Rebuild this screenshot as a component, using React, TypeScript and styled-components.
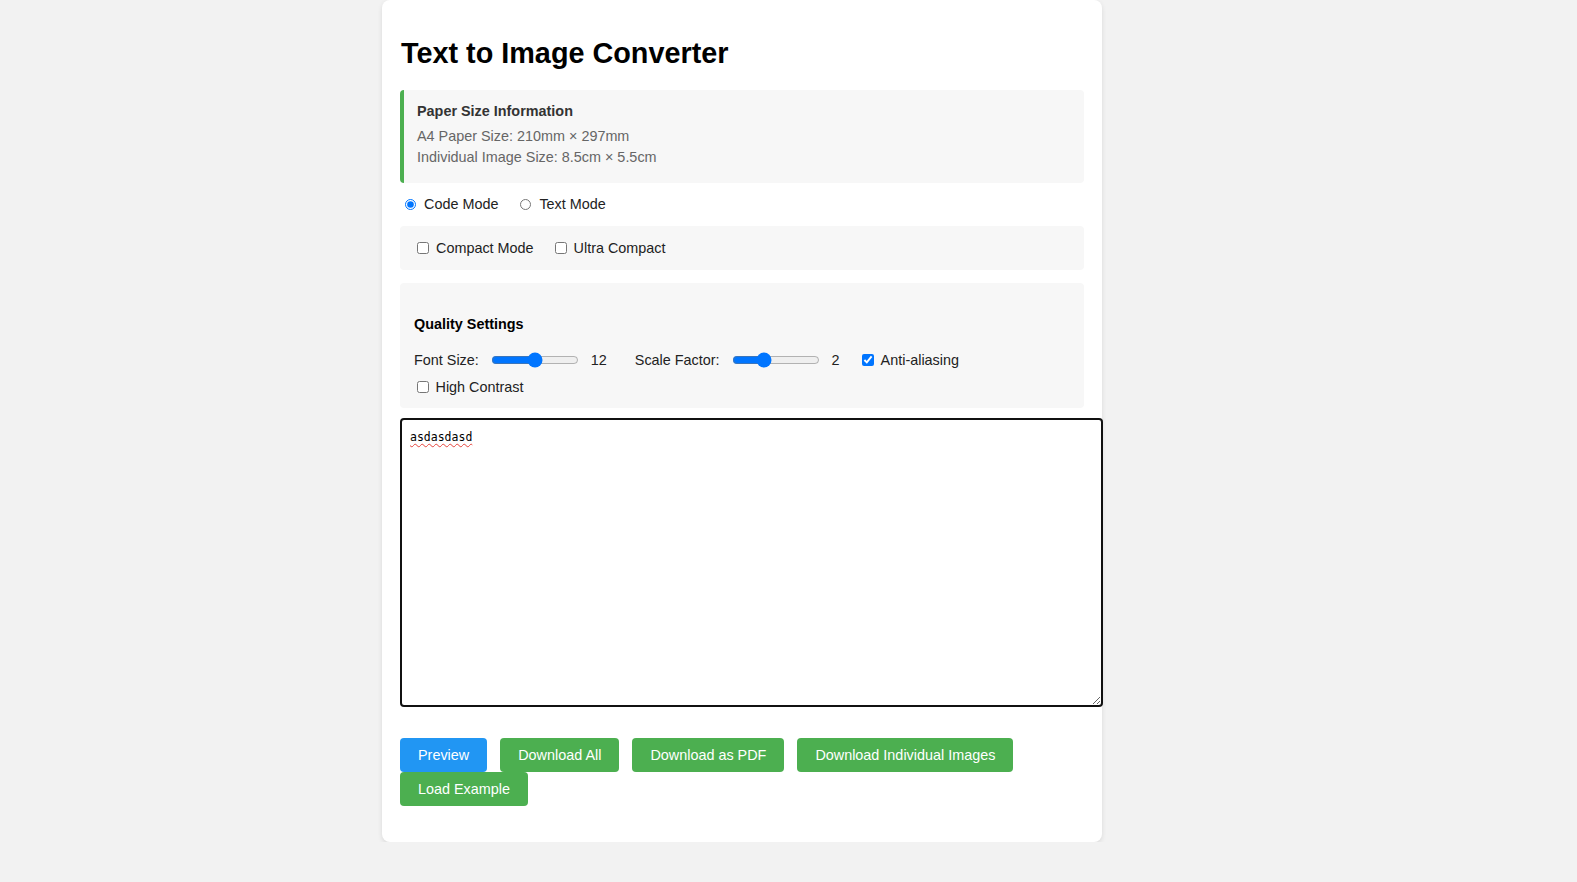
import React, { useState } from "react";
import styled, { createGlobalStyle } from "styled-components";

const GlobalStyle = createGlobalStyle`
  html, body { margin: 0; padding: 0; }
  body {
    background: #f2f2f2;
    font-family: "Liberation Sans", Arial, sans-serif;
    color: #222;
  }
`;

const Layout = styled.div`
  width: 813px;
  margin: 0 auto;
`;

const Card = styled.main`
  width: 720px;
  box-sizing: border-box;
  background: #fff;
  border-radius: 8px;
  box-shadow: 0 2px 5px rgba(0, 0, 0, 0.1);
  padding: 18px 18px 36px;
`;

const Title = styled.h1`
  margin: 18px 0 20px 1px;
  font-size: 28.8px;
  line-height: 34px;
  font-weight: 700;
  color: #000;
`;

const InfoBox = styled.section`
  background: #f7f7f7;
  border-left: 4px solid #4caf50;
  border-radius: 4px;
  padding: 11px 15px 15px 13px;
  height: 93px;
  box-sizing: border-box;
`;

const InfoTitle = styled.div`
  font-size: 14.4px;
  line-height: 21px;
  font-weight: 700;
  color: #333;
  margin-bottom: 4px;
`;

const InfoLine = styled.div`
  font-size: 14.4px;
  line-height: 21px;
  color: #666;
`;

const ModeRow = styled.div`
  display: flex;
  align-items: center;
  gap: 22px;
  height: 20px;
  margin: 11px 0 12px;
  padding-left: 5px;
`;

const OptionLabel = styled.label<{ $gap?: number }>`
  display: inline-flex;
  align-items: center;
  gap: ${(p) => p.$gap ?? 7}px;
  font-size: 14.4px;
  line-height: 20px;
  color: #222;
  white-space: nowrap;
`;

const Radio = styled.input.attrs({ type: "radio" })`
  width: 11px;
  height: 11px;
  margin: 0;
`;

const Check = styled.input.attrs({ type: "checkbox" })<{ $inset?: number }>`
  width: 12px;
  height: 12px;
  margin: 0 0 0 ${(p) => p.$inset ?? 0}px;
`;

const Panel = styled.section<{ $pad: string; $top?: number }>`
  background: #f7f7f7;
  border-radius: 4px;
  padding: ${(p) => p.$pad};
  margin-top: ${(p) => p.$top ?? 0}px;
`;

const PanelRow = styled.div<{ $gap: number }>`
  display: flex;
  align-items: center;
  gap: ${(p) => p.$gap}px;
  height: 20px;
`;

const PanelTitle = styled.div`
  font-size: 14.4px;
  line-height: 20px;
  font-weight: 700;
  color: #000;
  margin-bottom: 16px;
`;

const SliderGroup = styled.div<{ $trail: number }>`
  display: flex;
  align-items: center;
  gap: 12px;
  margin-right: ${(p) => p.$trail}px;
  font-size: 14.4px;
  color: #222;
`;

const Slider = styled.input.attrs({ type: "range" })`
  width: 88px;
  margin: 0;
`;

const QualityRows = styled.div`
  display: flex;
  flex-direction: column;
  gap: 7px;
`;

const Editor = styled.textarea`
  display: block;
  width: 703px;
  height: 289px;
  box-sizing: border-box;
  margin: 10px 0 31px;
  padding: 10px 8px 8px;
  border: 2px solid #111;
  border-radius: 4px;
  font-family: "DejaVu Sans Mono", monospace;
  font-size: 11.5px;
  line-height: 14px;
  color: #000;
  outline: none;
  text-decoration: underline wavy #e5443c;
  text-decoration-thickness: 1px;
  text-underline-offset: 2px;
`;

const ButtonBar = styled.div`
  display: flex;
  flex-wrap: wrap;
  column-gap: 13px;
  row-gap: 0;
`;

const ActionButton = styled.button<{ $primary?: boolean }>`
  height: 34px;
  padding: 0 18px;
  border: none;
  border-radius: 4px;
  background: ${(p) => (p.$primary ? "#2196f3" : "#4caf50")};
  color: #fff;
  font-family: "Liberation Sans", Arial, sans-serif;
  font-size: 14.4px;
  cursor: pointer;
  white-space: nowrap;
`;

export default function App() {
  const [mode, setMode] = useState<"code" | "text">("code");
  const [compact, setCompact] = useState(false);
  const [ultra, setUltra] = useState(false);
  const [fontSize, setFontSize] = useState(12);
  const [scale, setScale] = useState(2);
  const [aa, setAa] = useState(true);
  const [contrast, setContrast] = useState(false);
  const [text, setText] = useState("asdasdasd");

  return (
    <>
      <GlobalStyle />
      <Layout>
        <Card>
          <Title>Text to Image Converter</Title>
          <InfoBox>
            <InfoTitle>Paper Size Information</InfoTitle>
            <InfoLine>A4 Paper Size: 210mm × 297mm</InfoLine>
            <InfoLine>Individual Image Size: 8.5cm × 5.5cm</InfoLine>
          </InfoBox>

          <ModeRow>
            <OptionLabel $gap={8}>
              <Radio name="mode" checked={mode === "code"} onChange={() => setMode("code")} />
              Code Mode
            </OptionLabel>
            <OptionLabel $gap={8}>
              <Radio name="mode" checked={mode === "text"} onChange={() => setMode("text")} />
              Text Mode
            </OptionLabel>
          </ModeRow>

          <Panel $pad="12px 14px">
            <PanelRow $gap={21}>
              <OptionLabel $gap={7}>
                <Check $inset={3} checked={compact} onChange={(e) => setCompact(e.target.checked)} />
                Compact Mode
              </OptionLabel>
              <OptionLabel $gap={7}>
                <Check checked={ultra} onChange={(e) => setUltra(e.target.checked)} />
                Ultra Compact
              </OptionLabel>
            </PanelRow>
          </Panel>

          <Panel $pad="31px 14px 11px" $top={13}>
            <PanelTitle>Quality Settings</PanelTitle>
            <QualityRows>
              <PanelRow $gap={0}>
                <SliderGroup $trail={28}>
                  Font Size:
                  <Slider min={8} max={16} value={fontSize} onChange={(e) => setFontSize(+e.target.value)} />
                  <span>{fontSize}</span>
                </SliderGroup>
                <SliderGroup $trail={22}>
                  Scale Factor:
                  <Slider min={1} max={4} value={scale} onChange={(e) => setScale(+e.target.value)} />
                  <span>{scale}</span>
                </SliderGroup>
                <OptionLabel $gap={7}>
                  <Check checked={aa} onChange={(e) => setAa(e.target.checked)} />
                  Anti-aliasing
                </OptionLabel>
              </PanelRow>
              <PanelRow $gap={0}>
                <OptionLabel $gap={7}>
                  <Check $inset={2.5} checked={contrast} onChange={(e) => setContrast(e.target.checked)} />
                  High Contrast
                </OptionLabel>
              </PanelRow>
            </QualityRows>
          </Panel>

          <Editor spellCheck={false} value={text} onChange={(e) => setText(e.target.value)} />

          <ButtonBar>
            <ActionButton $primary>Preview</ActionButton>
            <ActionButton>Download All</ActionButton>
            <ActionButton>Download as PDF</ActionButton>
            <ActionButton>Download Individual Images</ActionButton>
            <ActionButton>Load Example</ActionButton>
          </ButtonBar>
        </Card>
      </Layout>
    </>
  );
}
